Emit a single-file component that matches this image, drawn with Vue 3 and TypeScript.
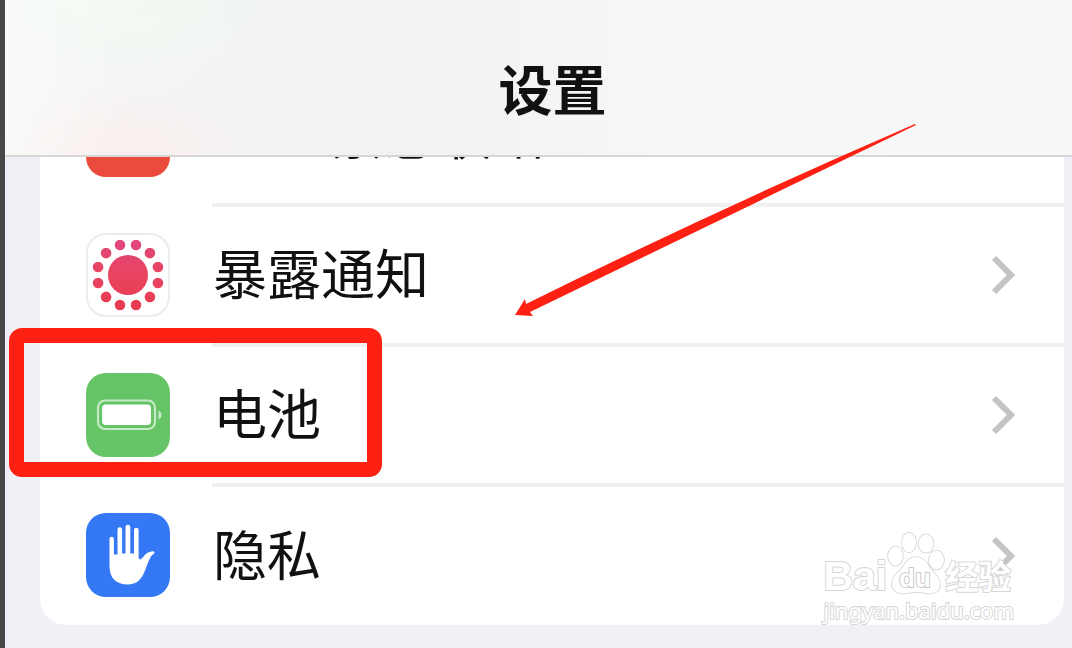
<script setup lang="ts">
interface SettingRow {
  id: 'sos' | 'exposure' | 'battery' | 'privacy'
  label: string
  chevron: boolean
  marked: boolean
}

const rows: SettingRow[] = [
  { id: 'sos', label: 'SOS 紧急联络', chevron: false, marked: false },
  { id: 'exposure', label: '暴露通知', chevron: true, marked: false },
  { id: 'battery', label: '电池', chevron: true, marked: true },
  { id: 'privacy', label: '隐私', chevron: true, marked: false },
]

// Twelve dots evenly spaced on a ring around the centre of the 84-unit icon
const dots = Array.from({ length: 12 }, (_, i) => {
  const angle = ((i * 30 + 15) * Math.PI) / 180
  return { x: 42 + 31 * Math.cos(angle), y: 42 + 31 * Math.sin(angle) }
})
</script>

<template>
  <div class="screen">
    <header class="navbar">
      <h1 class="title">设置</h1>
    </header>

    <main class="content">
      <ul class="card">
        <li v-for="row in rows" :key="row.id" class="item">
          <a class="row" href="#">
            <svg class="icon" viewBox="0 0 84 84" aria-hidden="true">
              <g v-if="row.id === 'sos'">
                <rect width="84" height="84" rx="20" fill="#eb4b3d" />
              </g>
              <g v-else-if="row.id === 'exposure'">
                <defs>
                  <linearGradient id="rose" gradientUnits="userSpaceOnUse" x1="0" y1="6" x2="0" y2="78">
                    <stop offset="0" stop-color="#e0487c" />
                    <stop offset="0.5" stop-color="#e94360" />
                    <stop offset="1" stop-color="#e93a50" />
                  </linearGradient>
                </defs>
                <rect x="1" y="1" width="82" height="82" rx="19" fill="#fff" stroke="#ececec" stroke-width="2" />
                <g fill="url(#rose)">
                  <circle cx="42" cy="42" r="20" />
                  <circle v-for="(dot, i) in dots" :key="i" :cx="dot.x" :cy="dot.y" r="5.300" />
                </g>
              </g>
              <g v-else-if="row.id === 'battery'">
                <rect width="84" height="84" rx="20" fill="#65c466" />
                <rect x="12" y="27.500" width="57" height="28.500" rx="7" fill="none" stroke="#c5eac5" stroke-width="2.200" />
                <rect x="16" y="31.500" width="49" height="20.500" rx="4" fill="#fff" />
                <path d="M72.500 37.500c4 1.500 4 7.500 0 9z" fill="#c5eac5" />
              </g>
              <g v-else>
                <rect width="84" height="84" rx="20" fill="#3478f6" />
                <path
                  d="M23.500 26a2.200 2.200 0 0 1 4.400 0V41.500H31.500V16.500a2.300 2.300 0 0 1 4.600 0V40.500H39.500V14.200a2.400 2.400 0 0 1 4.800 0V40.500H48V17a2.300 2.300 0 0 1 4.600 0V45l1.400 1.500C56.500 46 58 42 60.500 40.500C63.500 38.700 66.500 37.500 68.500 38.800C69 40.500 66.500 41.500 65 43.500C61.500 49 60.500 55 57.500 61C54 68 49 71.500 42 71.500C30 71.500 23.500 65 23.500 53z"
                  fill="#fff"
                />
              </g>
            </svg>
            <span class="body">
              <span class="label">{{ row.label }}</span>
              <svg v-if="row.chevron" class="chevron" viewBox="0 0 26 42" aria-hidden="true">
                <path d="M4 4L21 21L4 38" fill="none" stroke="#c4c4c6" stroke-width="6" />
              </svg>
            </span>
          </a>
          <span v-if="row.marked" class="marker"></span>
        </li>
      </ul>
    </main>

    <svg class="arrow" viewBox="0 0 402 194" aria-hidden="true">
      <path d="M401 0L402 1L16 188L19 192L1 191L11 175L12 180Q206 84 401 0z" fill="#fe2013" />
    </svg>

    <div class="watermark">
      <div class="brand">
        <span class="latin">Bai</span>
        <svg class="paw" viewBox="0 0 58 64" aria-hidden="true">
          <g fill="#fff" stroke="#d2d2d2" stroke-width="1.600">
            <ellipse cx="8.500" cy="25" rx="7.500" ry="9.500" />
            <ellipse cx="22" cy="11.500" rx="7" ry="9.800" />
            <ellipse cx="39" cy="12.500" rx="7.500" ry="9.300" />
            <ellipse cx="49.500" cy="29" rx="7.500" ry="9.500" />
            <path d="M28.500 26C36 26 40 31 43 37C47 43 53 46 53 53C53 60 48 63 42 62.500C37 62 34 61 29 61C24 61 21 62.500 16 62.500C9 62.500 4.500 58 5 52C5.500 45 11 42 15 37C19 31 22 26 28.500 26z" />
            <text class="du" x="28" y="56" text-anchor="middle" stroke="#bcbcbc">du</text>
          </g>
        </svg>
        <span class="hanzi">经验</span>
      </div>
      <div class="site">jingyan.baidu.com</div>
    </div>
  </div>
</template>

<style>
html,
body {
  margin: 0;
  background: #f1f0f6;
}
</style>

<style scoped>
.screen {
  position: relative;
  box-sizing: border-box;
  min-height: 100vh;
  border-left: 5px solid #484848;
  background: #f1f0f6;
  overflow: hidden;
  font-family: "Noto Sans CJK SC", sans-serif;
  color: #111;
}

.navbar {
  position: relative;
  z-index: 1;
  box-sizing: border-box;
  height: 157px;
  padding-top: 48px;
  border-bottom: 2px solid #d6d6d7;
  background:
    linear-gradient(90deg, rgba(255, 255, 255, 0.4), transparent 120px),
    radial-gradient(ellipse 150px 70px at 115px 155px, rgba(255, 232, 230, 0.5), transparent),
    radial-gradient(ellipse 220px 100px at 110px 0, rgba(240, 252, 242, 0.7), transparent),
    linear-gradient(90deg, #f7f7f6 0, #f2f2f2 260px, #f2f2f2 440px, #f7f7f7 650px, #f8f8f8 100%);
}

.title {
  margin: 0;
  font-size: 54px;
  line-height: 80px;
  font-weight: 700;
  text-align: center;
  padding-left: 28px;
}

.content {
  padding: 0 8px 23px 35px;
}

.card {
  margin: -90px 0 0;
  padding: 0;
  list-style: none;
  background: #fff;
  border-radius: 26px;
}

.item {
  position: relative;
}

.row {
  display: flex;
  align-items: stretch;
  gap: 42px;
  padding-left: 46px;
  color: inherit;
  text-decoration: none;
}

.icon {
  flex: none;
  width: 84px;
  height: 84px;
  margin: 26px 0 30px;
}

.body {
  flex: 1;
  display: flex;
  align-items: center;
  justify-content: space-between;
  padding-right: 48px;
  border-bottom: 4px solid #f0f0f1;
}

.item:last-child .icon {
  margin-bottom: 28px;
}

.item:last-child .body {
  border-bottom: 0;
}

.label {
  padding: 0 0 6px 1px;
  font-size: 54px;
  line-height: 80px;
}

.chevron {
  width: 26px;
  height: 42px;
}

.marker {
  position: absolute;
  top: -19px;
  left: -31px;
  box-sizing: border-box;
  width: 373px;
  height: 149px;
  border: 15px solid #fe2013;
  border-radius: 13px;
}

.arrow {
  position: absolute;
  z-index: 2;
  top: 124px;
  left: 509px;
  width: 402px;
  height: 194px;
}

.watermark {
  position: absolute;
  right: 58px;
  bottom: 23px;
  color: #fff;
  -webkit-text-stroke: 2px #d6d6d6;
  paint-order: stroke fill;
}

.brand {
  display: flex;
  align-items: flex-end;
}

.latin {
  font: 700 41px/38px "Liberation Sans", sans-serif;
}

.paw {
  width: 58px;
  height: 64px;
}

.du {
  font: 700 26px "Liberation Sans", sans-serif;
  -webkit-text-stroke: 0;
  paint-order: stroke fill;
}

.hanzi {
  font-size: 33px;
  line-height: 40px;
  font-weight: 700;
}

.site {
  font: 22px/30px "Noto Sans", sans-serif;
}
</style>
